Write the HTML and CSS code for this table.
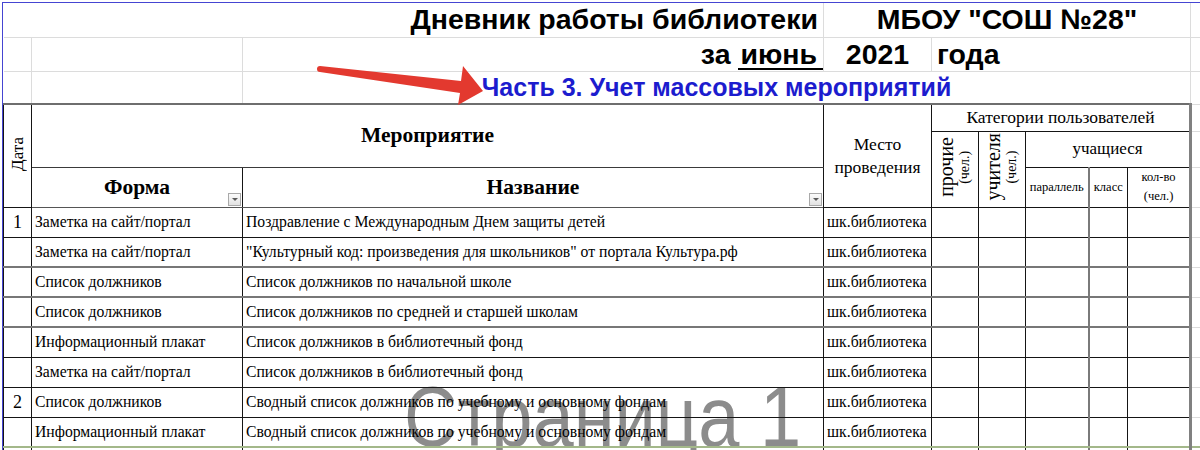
FILE: index.html
```html
<!DOCTYPE html>
<html lang="ru">
<head>
<meta charset="utf-8">
<title>Дневник работы библиотеки</title>
<link rel="stylesheet" href="styles.css">
</head>
<body>
<div class="sheet">
<table class="grid">
  <colgroup>
    <col class="c-a"><col class="c-b"><col class="c-c"><col class="c-d"><col class="c-e"><col class="c-f"><col class="c-g"><col class="c-h"><col class="c-i"><col class="c-j">
  </colgroup>
  <tr class="r1">
    <td class="top title-left" colspan="3">Дневник работы библиотеки</td>
    <td class="top title-center" colspan="6">МБОУ "СОШ №28"</td>
    <td class="top"></td>
  </tr>
  <tr class="r2">
    <td class="top"></td>
    <td class="top"></td>
    <td class="top title-right">за <span class="month">июнь</span></td>
    <td class="top title-center">2021</td>
    <td class="top title-left-al" colspan="5">года</td>
    <td class="top"></td>
  </tr>
  <tr class="r3">
    <td class="top"></td>
    <td class="top"></td>
    <td class="top part" colspan="7">Часть 3. Учет массовых мероприятий</td>
    <td class="top"></td>
  </tr>
  <tr class="r4 head-first">
    <td class="date-h" rowspan="3"><span class="vert v-date">Дата</span></td>
    <td class="h-big" colspan="2" rowspan="2">Мероприятие</td>
    <td class="h-place" rowspan="3">Место<br>проведения</td>
    <td class="h-cat" colspan="5">Категории пользователей</td>
    <td class="side"></td>
  </tr>
  <tr class="r5">
    <td class="h-vert" rowspan="2"><span class="vert"><span class="v-main">прочие</span><br><span class="v-sub">(чел.)</span></span></td>
    <td class="h-vert" rowspan="2"><span class="vert"><span class="v-main">учителя</span><br><span class="v-sub">(чел.)</span></span></td>
    <td class="h-pupils" colspan="3">учащиеся</td>
    <td class="side"></td>
  </tr>
  <tr class="r6">
    <td class="h-mid">Форма<span class="filter"></span></td>
    <td class="h-mid">Название<span class="filter"></span></td>
    <td class="h-small">параллель</td>
    <td class="h-small thick-l">класс</td>
    <td class="h-small">кол-во<br>(чел.)</td>
    <td class="side"></td>
  </tr>
  <tr class="row">
    <td class="num">1</td><td>Заметка на сайт/портал</td><td>Поздравление с Международным Днем защиты детей</td><td>шк.библиотека</td><td></td><td></td><td></td><td class="thick-l"></td><td></td><td class="side"></td>
  </tr>
  <tr class="row gray-b">
    <td class="num"></td><td>Заметка на сайт/портал</td><td>"Культурный код: произведения для школьников" от портала Культура.рф</td><td>шк.библиотека</td><td></td><td></td><td></td><td class="thick-l"></td><td></td><td class="side"></td>
  </tr>
  <tr class="row gray-b">
    <td class="num"></td><td>Список должников</td><td>Список должников по начальной школе</td><td>шк.библиотека</td><td></td><td></td><td></td><td class="thick-l"></td><td></td><td class="side"></td>
  </tr>
  <tr class="row gray-b">
    <td class="num"></td><td>Список должников</td><td>Список должников по средней и старшей школам</td><td>шк.библиотека</td><td></td><td></td><td></td><td class="thick-l"></td><td></td><td class="side"></td>
  </tr>
  <tr class="row">
    <td class="num"></td><td>Информационный плакат</td><td>Список должников в библиотечный фонд</td><td>шк.библиотека</td><td></td><td></td><td></td><td class="thick-l"></td><td></td><td class="side"></td>
  </tr>
  <tr class="row">
    <td class="num"></td><td>Заметка на сайт/портал</td><td>Список должников в библиотечный фонд</td><td>шк.библиотека</td><td></td><td></td><td></td><td class="thick-l"></td><td></td><td class="side"></td>
  </tr>
  <tr class="row">
    <td class="num">2</td><td>Список должников</td><td>Сводный список должников по учебному и основному фондам</td><td>шк.библиотека</td><td></td><td></td><td></td><td class="thick-l"></td><td></td><td class="side"></td>
  </tr>
  <tr class="row green-b">
    <td class="num"></td><td>Информационный плакат</td><td>Сводный список должников по учебному и основному фондам</td><td>шк.библиотека</td><td></td><td></td><td></td><td class="thick-l"></td><td></td><td class="side"></td>
  </tr>
  <tr class="row">
    <td class="num"></td><td></td><td></td><td></td><td></td><td></td><td></td><td class="thick-l"></td><td></td><td class="side"></td>
  </tr>
</table>
</div>

<svg class="arrow" width="1200" height="120" viewBox="0 0 1200 120" aria-hidden="true">
  <path d="M320,66 L461,81 L463,66 L483,91 L458,105 L460,93 L320,72 A3,3 0 0 1 320,66 Z" fill="#e3392f"/>
</svg>

<div class="watermark">Страница 1</div>
</body>
</html>
```

FILE: styles.css
```css
html, body {
  margin: 0;
  padding: 0;
}

body {
  width: 1200px;
  height: 450px;
  overflow: hidden;
  position: relative;
  background: #ffffff;
  font-family: "Liberation Serif", "Times New Roman", serif;
  color: #000000;
}

.sheet {
  margin: 2px 0 0 2px;
  border-top: 1px solid #4545d2;
  border-left: 1px solid #4545d2;
}

.grid {
  border-collapse: collapse;
  table-layout: fixed;
  width: 1197px;
}

.c-a { width: 28px; }
.c-b { width: 211px; }
.c-c { width: 581px; }
.c-d { width: 108px; }
.c-e { width: 47px; }
.c-f { width: 47px; }
.c-g { width: 63px; }
.c-h { width: 39px; }
.c-i { width: 63px; }
.c-j { width: 10px; }

.grid td {
  padding: 0 3px;
  vertical-align: middle;
  white-space: nowrap;
  overflow: hidden;
  font-size: 15.7px;
  border: 1px solid #151515;
}

/* top spreadsheet area */
.grid td.top {
  border: none;
  border-right: 1px solid #dcdcdc;
  border-bottom: 1px solid #dcdcdc;
  font-family: "Liberation Sans", Arial, sans-serif;
  font-weight: bold;
  font-size: 28.5px;
  overflow: visible;
}

.r1 { height: 34px; }
.r2 { height: 33px; }
.r3 { height: 33px; }

.title-left { text-align: right; padding-right: 5px !important; }
.title-center { text-align: center; }
.title-right { text-align: right; padding-right: 0 !important; }
.title-left-al { text-align: left; padding-left: 5px !important; }

.month {
  display: inline-block;
  padding: 0 6px 0 2px;
  line-height: 27px;
  border-bottom: 2px solid #000;
}

.grid td.part {
  color: #1c1cce;
  font-size: 25px;
  text-align: center;
}

/* header */
.head-first td {
  border-top: 2px solid #6e6e6e;
}

.r4 { height: 27px; }
.r5 { height: 36px; }
.r6 { height: 40px; }

.grid td.date-h {
  text-align: center;
  padding: 0;
}

.vert {
  display: inline-block;
  writing-mode: vertical-rl;
  transform: rotate(180deg);
  text-align: center;
}

.v-date {
  font-size: 17px;
}

.grid td.h-big {
  text-align: center;
  font-weight: bold;
  font-size: 21.5px;
  border-bottom-color: #3a3a3a;
}

.grid td.h-mid {
  position: relative;
  text-align: center;
  font-weight: bold;
  font-size: 21.5px;
  border-bottom-color: #555555;
}

.filter {
  position: absolute;
  right: 1px;
  bottom: 1px;
  width: 11px;
  height: 11px;
  border: 1px solid #a9a9a9;
  background: linear-gradient(#fbfbfb, #e2e2e2);
}

.filter::after {
  content: "";
  position: absolute;
  left: 3px;
  top: 4px;
  border-left: 3px solid transparent;
  border-right: 3px solid transparent;
  border-top: 3px solid #5a5a5a;
}

.grid td.h-place {
  text-align: center;
  font-size: 17.5px;
  line-height: 23px;
  white-space: normal;
  padding: 0;
}

.grid td.h-cat {
  text-align: center;
  font-size: 17.5px;
  padding: 0;
}

.grid td.h-vert {
  text-align: center;
  padding: 0;
}

.v-main {
  font-size: 20px;
  line-height: 19px;
}

.v-sub {
  font-size: 14px;
  line-height: 16px;
}

.grid td.h-pupils {
  text-align: center;
  font-size: 17px;
}

.grid td.h-small {
  text-align: center;
  font-size: 12.5px;
  line-height: 19px;
  padding: 0;
}

.grid td.side {
  border: none;
  border-left: 3px solid #808080;
  border-bottom: 1px solid #dcdcdc;
}

.grid td.thick-l {
  border-left: 2px solid #7a7a7a;
}

/* data rows */
.row { height: 30px; }

.grid td.num {
  text-align: center;
  font-size: 18px;
  padding: 0;
}

.gray-b td {
  border-bottom: 2px solid #777777 !important;
}

.grid .gray-b td.side {
  border-bottom: 1px solid #dcdcdc !important;
}

.green-b td {
  border-bottom: 2px solid #a3b88a !important;
}

/* overlays */
.arrow {
  position: absolute;
  left: 0;
  top: 0;
}

.watermark {
  position: absolute;
  z-index: -1;
  left: 404px;
  top: 374px;
  font-family: "Liberation Sans", Arial, sans-serif;
  font-size: 74px;
  line-height: 1;
  color: #8c8c8c;
  white-space: nowrap;
  transform: scaleY(1.16);
  transform-origin: top left;
}
```
